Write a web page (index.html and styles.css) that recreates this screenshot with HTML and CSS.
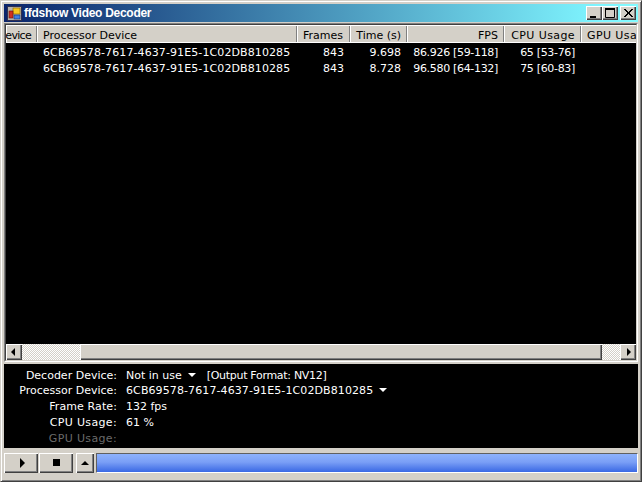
FILE: index.html
```html
<!DOCTYPE html>
<html>
<head>
<meta charset="utf-8">
<title>ffdshow Video Decoder</title>
<link rel="stylesheet" href="styles.css">
</head>
<body>
<div class="window">
  <div class="titlebar">
    <svg class="appicon" width="15" height="15" viewBox="0 0 15 15">
      <rect x="0.5" y="0.5" width="14" height="14" fill="#b8b4ac" stroke="#303050"/>
      <rect x="6" y="2" width="7" height="6" fill="#f8c820" stroke="#806000" stroke-width="0.6"/>
      <rect x="2" y="5" width="4" height="7" fill="#d03020" stroke="#601010" stroke-width="0.6"/>
      <rect x="7" y="9" width="6" height="4" fill="#4080e0" stroke="#103070" stroke-width="0.6"/>
    </svg>
    <span class="title">ffdshow Video Decoder</span>
    <div class="caption-buttons">
      <div class="capbtn"><svg width="16" height="14" viewBox="0 0 16 14"><rect x="4" y="10" width="6" height="2" fill="#000"/></svg></div>
      <div class="capbtn"><svg width="16" height="14" viewBox="0 0 16 14"><path d="M3.5 2.5h9v9h-9z" fill="none" stroke="#000"/><rect x="3" y="2" width="10" height="2" fill="#000"/></svg></div>
      <div class="capbtn close"><svg width="16" height="14" viewBox="0 0 16 14"><path d="M4 3l8 8M5 3l8 8M12 3l-8 8M13 3l-8 8" stroke="#000" fill="none" shape-rendering="crispEdges"/></svg></div>
    </div>
  </div>
  <div class="listview">
    <div class="list-inner">
      <div class="row header">
        <div class="cell hd c0 clip">Device</div>
        <div class="cell hd c1">Processor Device</div>
        <div class="cell hd c2">Frames</div>
        <div class="cell hd c3 right">Time (s)</div>
        <div class="cell hd c4 right">FPS</div>
        <div class="cell hd c5 right wide-text">CPU Usage</div>
        <div class="cell hd c6 wide-text">GPU Usage</div>
      </div>
      <div class="rows">
        <div class="row data">
          <div class="cell c0"></div>
          <div class="cell c1 guid">6CB69578-7617-4637-91E5-1C02DB810285</div>
          <div class="cell c2 right">843</div>
          <div class="cell c3 right">9.698</div>
          <div class="cell c4 right tight">86.926 [59-118]</div>
          <div class="cell c5 right tight">65 [53-76]</div>
          <div class="cell c6"></div>
        </div>
        <div class="row data">
          <div class="cell c0"></div>
          <div class="cell c1 guid">6CB69578-7617-4637-91E5-1C02DB810285</div>
          <div class="cell c2 right">843</div>
          <div class="cell c3 right">8.728</div>
          <div class="cell c4 right tight">96.580 [64-132]</div>
          <div class="cell c5 right tight">75 [60-83]</div>
          <div class="cell c6"></div>
        </div>
      </div>
      <div class="hscroll">
        <div class="sbtn"><svg width="16" height="16" viewBox="0 0 16 16"><path d="M5 8l4-4v8z" fill="#000"/></svg></div>
        <div class="track t-left"></div>
        <div class="thumb"></div>
        <div class="track t-right"></div>
        <div class="sbtn"><svg width="16" height="16" viewBox="0 0 16 16"><path d="M11 8l-4-4v8z" fill="#000"/></svg></div>
      </div>
    </div>
  </div>
  <div class="info">
    <div class="lbl">Decoder Device:</div>
    <div class="val">Not in use<svg class="drop" width="8" height="4" viewBox="0 0 8 4"><path d="M0 0h8L4 4z" fill="#fff"/></svg><span class="format">[Output Format: NV12]</span></div>
    <div class="lbl">Processor Device:</div>
    <div class="val"><span class="guid">6CB69578-7617-4637-91E5-1C02DB810285</span><svg class="drop" width="8" height="4" viewBox="0 0 8 4"><path d="M0 0h8L4 4z" fill="#fff"/></svg></div>
    <div class="lbl spaced">Frame Rate:</div>
    <div class="val">132 fps</div>
    <div class="lbl spaced-more">CPU Usage:</div>
    <div class="val">61 %</div>
    <div class="lbl spaced-more dim">GPU Usage:</div>
    <div class="val"></div>
  </div>
  <div class="controls">
    <div class="btn wide play"><svg width="8" height="10" viewBox="0 0 8 10"><path d="M1 0l5 5-5 5z" fill="#000"/></svg></div>
    <div class="btn wide stop"><svg width="8" height="8" viewBox="0 0 8 8"><rect width="7" height="7" fill="#000"/></svg></div>
    <div class="btn narrow"><svg width="8" height="5" viewBox="0 0 8 5"><path d="M4 0l4 4H0z" fill="#000"/></svg></div>
    <div class="progress"></div>
  </div>
</div>
</body>
</html>
```
FILE: styles.css
```css
* { box-sizing: border-box; }
html, body { margin: 0; padding: 0; background: #d4d0c8; }
body { width: 642px; height: 482px; overflow: hidden; font-family: "DejaVu Sans", sans-serif; font-size: 11px; }
.window {
  width: 642px; height: 482px;
  background: #d4d0c8;
  border-top: 1px solid #d4d0c8;
  border-left: 1px solid #d4d0c8;
  border-right: 1px solid #404040;
  border-bottom: 1px solid #404040;
  box-shadow: inset 1px 1px 0 #fff, inset -1px -1px 0 #808080;
  padding: 3px;
  display: flex; flex-direction: column;
}
.titlebar {
  height: 18px; flex: none;
  background: linear-gradient(90deg, #0a246a 0%, #7ff5ff 94%, #82fbff 100%);
  display: flex; align-items: center;
  padding-left: 3px; padding-right: 2px;
}
.appicon { flex: none; margin-right: 2px; }
.title {
  color: #fff; font-family: "Liberation Sans", sans-serif; font-weight: bold;
  font-size: 12px; letter-spacing: -0.28px; flex: 1; white-space: nowrap;
}
.caption-buttons { display: flex; }
.capbtn {
  width: 16px; height: 14px;
  background: #d4d0c8;
  box-shadow: inset 1px 1px 0 #fff, inset -1px -1px 0 #404040, inset -2px -2px 0 #808080;
}
.capbtn svg { display: block; }
.capbtn.close { margin-left: 2px; }
.listview {
  margin-top: 1px; height: 339px; flex: none;
  border-top: 1px solid #808080; border-left: 1px solid #808080;
  border-right: 1px solid #fff; border-bottom: 1px solid #fff;
}
.list-inner {
  height: 100%;
  border-top: 1px solid #404040; border-left: 1px solid #404040;
  border-right: 1px solid #d4d0c8; border-bottom: 1px solid #d4d0c8;
  display: flex; flex-direction: column; background: #000; overflow: hidden;
}
.row { display: flex; flex: none; }
.cell { flex: none; white-space: nowrap; overflow: hidden; padding: 0 5px; }
.right { text-align: right; }
.header { height: 18px; background: #d4d0c8; color: #000; }
.hd {
  height: 18px; line-height: 21px; padding: 0 6px;
  box-shadow: inset 1px 1px 0 #fff, inset 0 -1px 0 #fff, inset -1px 0 0 #808080;
}
.clip { padding: 0 6px 0 0; direction: rtl; letter-spacing: -0.7px; }
.c0 { width: 31px; }
.c1 { width: 260px; }
.c2 { width: 53px; }
.c3 { width: 57px; }
.c4 { width: 97px; }
.c5 { width: 77px; }
.c6 { width: 60px; }
.rows { flex: 1; padding-top: 2px; background: #000; color: #fff; }
.data { height: 16px; line-height: 16px; }
.data .cell { padding: 0 6px; }
.guid { letter-spacing: 0.1px; }
.tight { letter-spacing: -0.32px; }
.wide-text { letter-spacing: 0.4px; }
.hscroll { flex: none; height: 16px; display: flex; background: #d4d0c8; }
.sbtn, .thumb {
  background: #d4d0c8;
  box-shadow: inset 1px 1px 0 #fff, inset -1px -1px 0 #404040, inset -2px -2px 0 #808080;
}
.sbtn { width: 16px; height: 16px; flex: none; }
.sbtn svg { display: block; }
.thumb { width: 522px; flex: none; }
.track {
  flex: none;
  background-color: #fff;
  background-image: conic-gradient(#d4d0c8 25%, #fff 0 50%, #d4d0c8 0 75%, #fff 0);
  background-size: 2px 2px;
}
.t-left { width: 58px; }
.t-right { flex: 1; }
.info {
  margin-top: 2px; height: 84px; flex: none;
  background: #000; color: #fff;
  display: grid; grid-template-columns: 113px 1fr; column-gap: 9px;
  grid-template-rows: 15px; grid-auto-rows: 16px; padding-top: 4px; line-height: 16px;
}
.lbl { text-align: right; white-space: nowrap; }
.spaced { letter-spacing: 0.1px; }
.spaced-more { letter-spacing: 0.35px; }
.dim { color: #6a6a6a; }
.val { white-space: nowrap; }
.drop { margin-left: 6px; vertical-align: 2px; }
.format { margin-left: 11px; letter-spacing: -0.3px; }
.controls { margin-top: 5px; display: flex; height: 20px; flex: none; }
.btn {
  display: flex; align-items: center; justify-content: center;
  background: #d4d0c8;
  box-shadow: inset 1px 1px 0 #fff, inset -1px -1px 0 #404040, inset -2px -2px 0 #808080;
}
.wide { width: 34px; margin-right: 1px; }
.play { padding-left: 3px; }
.stop { padding-left: 2px; }
.narrow { width: 18px; margin-left: 2px; margin-right: 2px; }
.progress {
  flex: 1; height: 20px;
  border-top: 1px solid #606060; border-left: 1px solid #606060;
  border-right: 1px solid #fff; border-bottom: 1px solid #fff;
  background: linear-gradient(180deg, #8eb2fc 0%, #7a9ff6 45%, #3a68e4 100%);
}
```
